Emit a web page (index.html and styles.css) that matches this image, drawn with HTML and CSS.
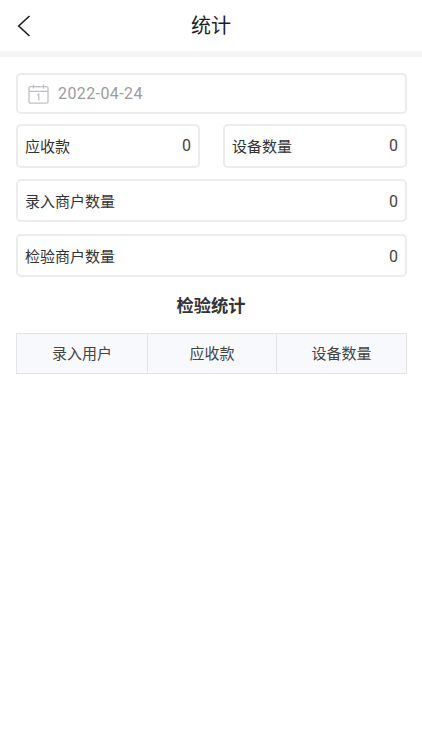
FILE: index.html
```html
<!DOCTYPE html>
<html lang="zh-CN">
<head>
<meta charset="utf-8">
<title>统计</title>
<link rel="stylesheet" href="styles.css">
</head>
<body>
<header class="nav">
  <svg class="back" width="14" height="22" viewBox="0 0 14 22" fill="none" stroke="#1f1f1f" stroke-width="1.6"><path d="M12.5 1 1.7 11l10.8 10"/></svg>
  <h1 class="nav-title">统计</h1>
</header>
<main class="content">
  <div class="card date">
    <svg class="cal" width="21" height="20" viewBox="0 0 21 20" fill="none" stroke="#bfbfc5" stroke-width="1.3"><rect x="1" y="2.6" width="19" height="16.6" rx="1.5"/><path d="M1 7.4h19M5.5.6v4M15.5.6v4M8.5 2.6h4"/><path d="M9.2 11.2l1.6-1v6.4" stroke-width="1.2"/></svg>
    <span class="date-text">2022-04-24</span>
  </div>
  <div class="pair">
    <div class="card stat"><span>应收款</span><span class="num">0</span></div>
    <div class="card stat"><span>设备数量</span><span class="num">0</span></div>
  </div>
  <div class="card stat wide"><span>录入商户数量</span><span class="num">0</span></div>
  <div class="card stat wide second"><span>检验商户数量</span><span class="num">0</span></div>
  <h2 class="section">检验统计</h2>
  <div class="table">
    <div class="th">录入用户</div>
    <div class="th">应收款</div>
    <div class="th">设备数量</div>
  </div>
</main>
</body>
</html>
```
FILE: styles.css
```css
* { box-sizing: border-box; }
html, body { margin: 0; padding: 0; background: #fff; }
body {
  width: 422px;
  height: 750px;
  overflow: hidden;
  font-family: "Noto Sans CJK SC", "Roboto", sans-serif;
  color: #333;
}
.nav {
  height: 57px;
  padding-bottom: 2px;
  border-bottom: 6px solid #f5f5f5;
  display: flex;
  align-items: center;
  justify-content: center;
  position: relative;
}
.back { position: absolute; left: 17px; top: 15px; }
.nav-title { margin: 0; font-size: 20px; font-weight: 400; color: #1f1f1f; line-height: 49px; }
.content { padding: 16px 15px 0 16px; display: flex; flex-direction: column; }
.card {
  border: 2px solid #ececec;
  border-radius: 5px;
  background: #fff;
}
.date {
  height: 41px;
  display: flex;
  align-items: center;
  padding-left: 10px;
  gap: 9px;
}
.date-text { font-family: "Roboto", sans-serif; font-size: 16px; color: #9b9ba0; letter-spacing: .4px; }
.pair { display: grid; grid-template-columns: 184px 184px; justify-content: space-between; margin-top: 10px; }
.stat {
  height: 44px;
  display: flex;
  align-items: center;
  justify-content: space-between;
  padding: 0 7px;
  font-size: 15px;
}
.pair .stat { padding-bottom: 1px; }
.pair .stat + .stat { padding-left: 7px; }
.wide { margin-top: 11px; height: 43px; }
.wide .num { margin-top: 2px; }
.second { margin-top: 12px; }
.num { font-family: "Roboto", sans-serif; font-size: 16px; color: #444; }
.section {
  margin: 16px 0 0;
  text-align: center;
  font-size: 17.25px;
  font-weight: 700;
  line-height: 24px;
  color: #333;
  padding-right: 1px;
}
.table {
  margin-top: 16px;
  height: 41px;
  display: grid;
  grid-template-columns: 130px 129px 1fr;
  border: 1px solid #e4e4e8;
  background: #f8f9fd;
}
.th {
  display: flex;
  align-items: center;
  justify-content: center;
  font-size: 15px;
  color: #444;
  border-left: 1px solid #e4e4e8;
  padding-bottom: 3px;
}
.th:first-child { border-left: 0; }
```
